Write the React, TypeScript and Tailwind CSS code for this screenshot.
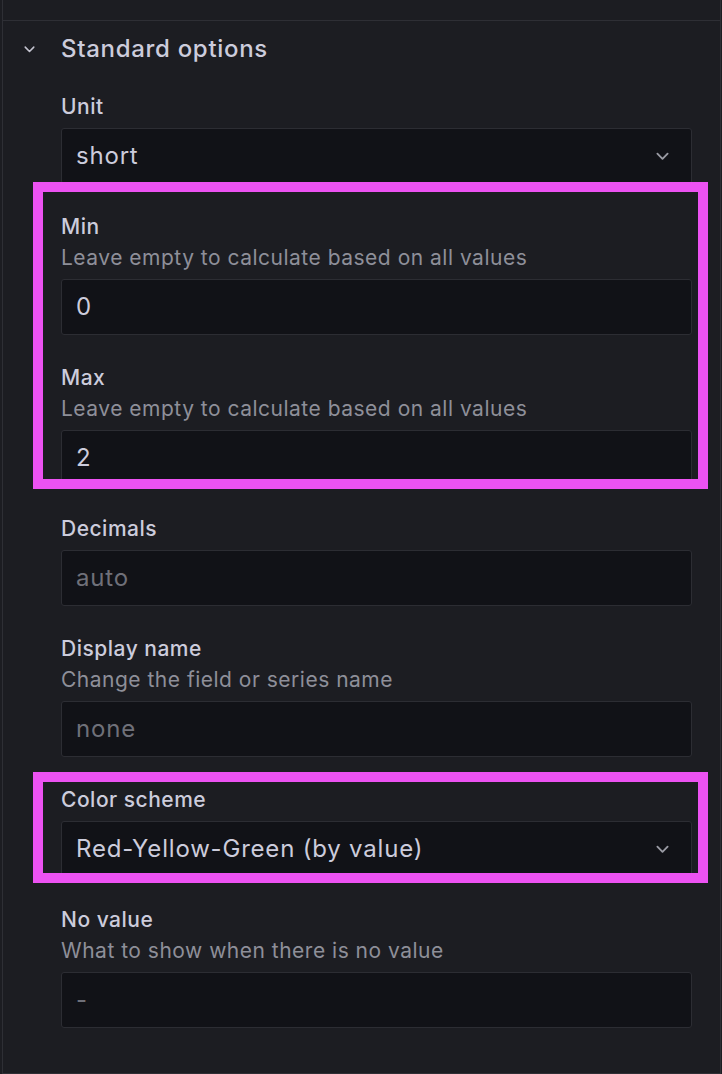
import React from "react";

type FieldProps = {
  label: string;
  description?: string;
  value?: string;
  placeholder?: string;
  select?: boolean;
};

function Chevron({ className }: { className?: string }) {
  return (
    <svg viewBox="0 0 14 9" fill="none" className={className}>
      <path d="M1.5 1.5 7 7l5.5-5.5" stroke="currentColor" strokeWidth="2" strokeLinecap="round" strokeLinejoin="round" />
    </svg>
  );
}

function Field({ label, description, value, placeholder, select }: FieldProps) {
  return (
    <div className="mb-[30px]">
      <div className="h-[26px] text-[21px] leading-[26px] font-medium tracking-[0.5px] text-[#ccccdc]">{label}</div>
      {description && (
        <div className="mt-[3px] text-[21px] leading-[29px] tracking-[0.5px] text-[#8e8f99]">{description}</div>
      )}
      <div
        className={`${description ? "mt-[7px]" : "mt-[8px]"} flex h-[56px] items-center justify-between rounded-[3px] border border-[#2c2d33] bg-[#111217] pl-[14px] pr-[22px]`}
      >
        {value ? (
          <span className="text-[24px] tracking-[0.8px] text-[#ccccdc]">{value}</span>
        ) : (
          <span className="text-[24px] tracking-[0.8px] text-[#6f7079]">{placeholder}</span>
        )}
        {select && <Chevron className="h-[9px] w-[13px] text-[#9a9ba4]" />}
      </div>
    </div>
  );
}

export default function App() {
  return (
    <div className="relative h-[1074px] w-[722px] bg-[#1c1d22] pl-[2px] pr-[1px] font-[Inter,sans-serif]">
      <div className="h-[1074px] border-x border-b border-[#2e2f35]">
        <div className="h-[20px]" />
        <div className="border-t border-[#2e2f35]">
          <div className="flex h-[56px] items-center">
            <Chevron className="ml-[21px] h-[7px] w-[11px] text-[#c4c4d0]" />
            <span className="ml-[26px] text-[24px] font-medium tracking-[0.7px] text-[#ccccdc]">Standard options</span>
          </div>
          <div className="pl-[58px] pr-[28px] pt-[17px]">
            <Field label="Unit" value="short" select />
            <Field label="Min" description="Leave empty to calculate based on all values" value="0" />
            <Field label="Max" description="Leave empty to calculate based on all values" value="2" />
            <Field label="Decimals" placeholder="auto" />
            <Field label="Display name" description="Change the field or series name" placeholder="none" />
            <Field label="Color scheme" value="Red-Yellow-Green (by value)" select />
            <Field label="No value" description="What to show when there is no value" placeholder="-" />
          </div>
        </div>
      </div>
      <div className="absolute left-[33px] top-[182px] h-[307px] w-[675px] border-[10px] border-[#ec52f2]" />
      <div className="absolute left-[33px] top-[772px] h-[111px] w-[675px] border-[10px] border-[#ec52f2]" />
    </div>
  );
}
